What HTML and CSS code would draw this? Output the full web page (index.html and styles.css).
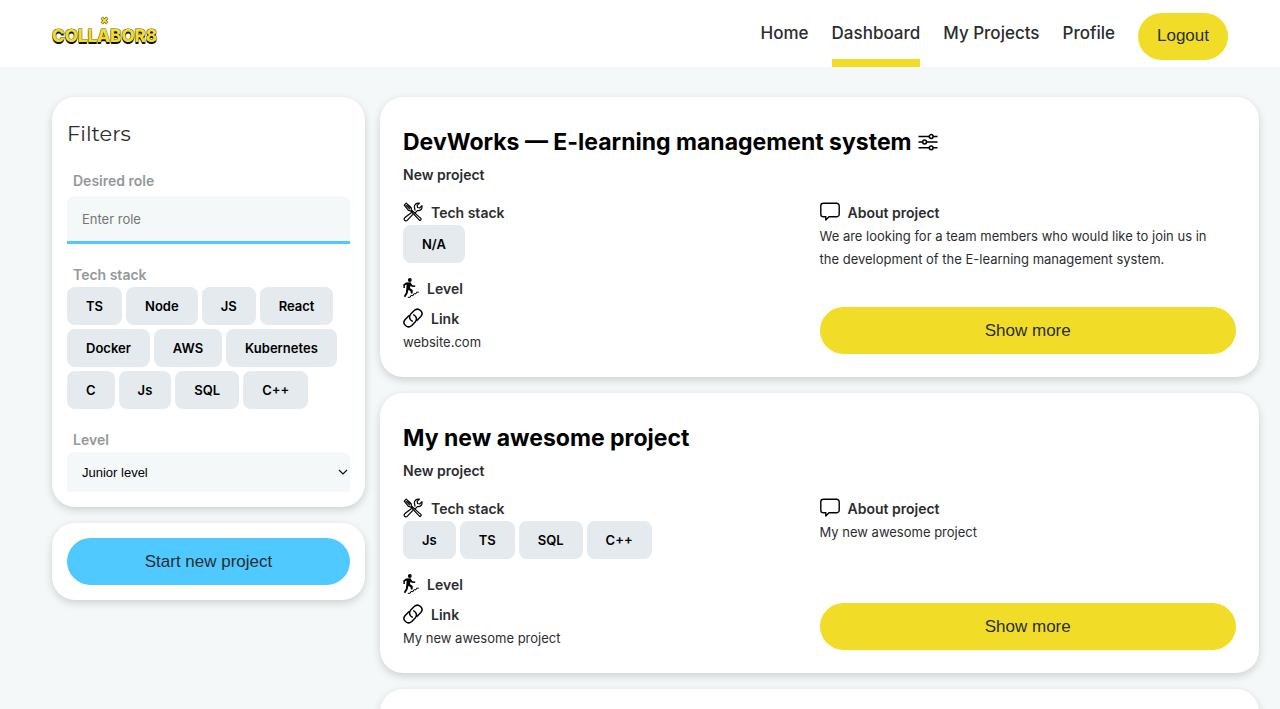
FILE: index.html
```html
<!DOCTYPE html>
<html lang="en">
<head>
    <meta charset="UTF-8">
    <meta name="viewport" content="width=device-width, initial-scale=1.0">
    <title>Collabor8</title>
    <link rel="stylesheet" href="styles.css">
</head>
<body>

    <!-- Shared icons -->
    <svg class="sprite" aria-hidden="true">
        <symbol id="icon-tools" viewBox="0 0 20 20">
            <g fill="none" stroke="currentColor" stroke-width="1.2" stroke-linejoin="round" stroke-linecap="round">
                <path d="M1.2 3.2 3.2 1.1 8.2 5.7 8.4 8 17.8 16.4C18.7 17.3 17.5 19 16.4 18.2L7.7 9 5.5 8.4Z"/>
                <path d="M3.1 3.3 6.6 6.8M4.6 2.8 7.3 5.5"/>
                <path d="M12 8.2 11.4 5.2C11.2 2.5 13.6.6 16.4 1.2L14.1 3.4 14.5 5.5 16.7 5.9 18.9 3.6C19.6 6.7 17.4 9.2 14.4 8.6L12.2 10.8M8.2 10.7 2 15.5C-.2 17.4 2.4 20.3 4.4 18.1L9.6 12.6"/>
            </g>
        </symbol>
        <symbol id="icon-climb" viewBox="0 0 16 20">
            <circle cx="6.8" cy="2" r="1.9" fill="currentColor"/>
            <path fill="currentColor" d="M3 4.4 7.5 4.2 9.4 7.3 12.2 7.6 12.2 9 8.7 8.8 7.6 7.8 6.9 10 9.7 12.1 9.6 15.5 7.8 15.4 7.6 13.2 5.5 11.8 4.5 15.7 2.2 19.2.8 18.3 2.8 14.8 3.4 9.9 3.6 6.4 1.8 7.5 1.9 10 .4 10 .3 6.5Z"/>
            <path fill="none" stroke="currentColor" stroke-width="1" d="M4.8 19.3H7.2L7.8 17.6H10.2L10.8 15.8H13L13.6 14.2H15.8"/>
        </symbol>
        <symbol id="icon-link" viewBox="0 0 20 20">
            <g fill="none" stroke="currentColor" stroke-width="1.5" stroke-linecap="round">
                <path d="M9.2 13.2C6.2 11.6 5.8 8.2 7.8 6L11.2 2.5C15.4-1.2 21.6 4.2 17.8 8.6L14.2 12.2"/>
                <path d="M10.8 6.8C13.8 8.4 14.2 11.8 12.2 14L8.8 17.5C4.6 21.2-1.6 15.8 2.2 11.4L5.8 7.8"/>
            </g>
        </symbol>
        <symbol id="icon-chat" viewBox="0 0 20 20">
            <path fill="none" stroke="currentColor" stroke-width="1.4" stroke-linejoin="round" d="M3.4 1.2H16.6A2.6 2.6 0 0 1 19.2 3.8V12.2A2.6 2.6 0 0 1 16.6 14.8H9L5.8 18V14.8H3.4A2.6 2.6 0 0 1 .8 12.2V3.8A2.6 2.6 0 0 1 3.4 1.2Z"/>
        </symbol>
        <symbol id="icon-sliders" viewBox="0 0 20 20">
            <g fill="none" stroke="currentColor" stroke-width="1.5">
                <path d="M.5 4.5H11.2M15.2 4.5H19.5M.5 10H4.6M8.6 10H19.5M.5 15.8H11.2M15.2 15.8H19.5"/>
                <circle cx="13.2" cy="4.5" r="1.9"/>
                <circle cx="6.6" cy="10" r="1.9"/>
                <circle cx="13.2" cy="15.8" r="1.9"/>
            </g>
        </symbol>
    </svg>

    <header class="header">
        <a class="logo" href="#">
            <svg class="logo-mark" viewBox="0 0 8 8" aria-hidden="true">
                <path d="M1.5 1.5 6.5 6.5M6.5 1.5 1.5 6.5" stroke="#6b6420" stroke-width="2.8"/>
                <path d="M1.7 1.7 6.3 6.3M6.3 1.7 1.7 6.3" stroke="#f1dd28" stroke-width="1.6"/>
            </svg>
            <span class="logo-text">COLLABOR8</span>
        </a>
        <nav class="nav">
            <a href="#">Home</a>
            <a href="#" class="active">Dashboard</a>
            <a href="#">My Projects</a>
            <a href="#">Profile</a>
            <button class="button button-logout">Logout</button>
        </nav>
    </header>

    <main class="main">
        <aside class="sidebar">
            <form class="panel">
                <h2 class="panel-title">Filters</h2>
                <div class="field">
                    <label for="role">Desired role</label>
                    <input type="text" id="role" placeholder="Enter role">
                </div>
                <div class="field">
                    <span class="label">Tech stack</span>
                    <div class="tags">
                        <button type="button" class="tag">TS</button>
                        <button type="button" class="tag">Node</button>
                        <button type="button" class="tag">JS</button>
                        <button type="button" class="tag">React</button>
                        <button type="button" class="tag">Docker</button>
                        <button type="button" class="tag">AWS</button>
                        <button type="button" class="tag">Kubernetes</button>
                        <button type="button" class="tag">C</button>
                        <button type="button" class="tag">Js</button>
                        <button type="button" class="tag">SQL</button>
                        <button type="button" class="tag">C++</button>
                    </div>
                </div>
                <div class="field">
                    <label for="level">Level</label>
                    <div class="select">
                        <select id="level">
                            <option>Junior level</option>
                        </select>
                        <svg class="chevron" viewBox="0 0 10 6" aria-hidden="true"><path d="M1 1 5 5 9 1" fill="none" stroke="#111" stroke-width="1.2"/></svg>
                    </div>
                </div>
            </form>
            <div class="panel">
                <button class="button button-blue">Start new project</button>
            </div>
        </aside>

        <section class="projects">
            <article class="card">
                <h1>DevWorks — E-learning management system <svg class="icon"><use href="#icon-sliders"/></svg></h1>
                <p class="status">New project</p>
                <div class="details">
                    <div>
                        <h3><svg class="icon"><use href="#icon-tools"/></svg>Tech stack</h3>
                        <div class="tags">
                            <span class="tag">N/A</span>
                        </div>
                        <h3 class="level"><svg class="icon icon-narrow"><use href="#icon-climb"/></svg>Level</h3>
                        <h3><svg class="icon"><use href="#icon-link"/></svg>Link</h3>
                        <p>website.com</p>
                    </div>
                    <div class="about">
                        <h3><svg class="icon"><use href="#icon-chat"/></svg>About project</h3>
                        <p>We are looking for a team members who would like to join us in the development of the E-learning management system.</p>
                        <button class="button">Show more</button>
                    </div>
                </div>
            </article>

            <article class="card">
                <h1>My new awesome project</h1>
                <p class="status">New project</p>
                <div class="details">
                    <div>
                        <h3><svg class="icon"><use href="#icon-tools"/></svg>Tech stack</h3>
                        <div class="tags">
                            <span class="tag">Js</span>
                            <span class="tag">TS</span>
                            <span class="tag">SQL</span>
                            <span class="tag">C++</span>
                        </div>
                        <h3 class="level"><svg class="icon icon-narrow"><use href="#icon-climb"/></svg>Level</h3>
                        <h3><svg class="icon"><use href="#icon-link"/></svg>Link</h3>
                        <p>My new awesome project</p>
                    </div>
                    <div class="about">
                        <h3><svg class="icon"><use href="#icon-chat"/></svg>About project</h3>
                        <p>My new awesome project</p>
                        <button class="button">Show more</button>
                    </div>
                </div>
            </article>

            <article class="card"></article>
        </section>
    </main>

</body>
</html>
```
FILE: styles.css
```css
* {
    box-sizing: border-box;
}

body {
    display: flex;
    flex-direction: column;
    margin: 0;
    height: 100vh;
    font-family: Inter, sans-serif;
    font-size: 14px;
    line-height: 23px;
    color: #2b2d2f;
    background-color: #f4f8f9;
}

h1, h2, h3, p {
    margin: 0;
}

.sprite {
    display: none;
}

/* Header */
.header {
    display: flex;
    flex: none;
    justify-content: space-between;
    height: 67px;
    padding: 0 52px;
    background: #fff;
}

.logo {
    display: flex;
    flex-direction: column;
    align-items: center;
    padding-top: 16px;
    text-decoration: none;
}

.logo-mark {
    width: 9px;
    height: 9px;
}

.logo-text {
    font-size: 17px;
    font-weight: 800;
    line-height: 22px;
    color: #f1dd28;
    -webkit-text-stroke: 1px #6b6420;
    paint-order: stroke fill;
    text-shadow: 0 2px 0 #111;
}

.nav {
    display: flex;
    gap: 23px;
}

.nav a {
    padding-top: 7px;
    border-bottom: 8px solid transparent;
    font-size: 17px;
    font-weight: 500;
    line-height: 52px;
    color: #2b2d2f;
    text-decoration: none;
}

.nav a.active {
    border-color: #f1dd28;
}

.button {
    width: 100%;
    height: 47px;
    padding: 0 19px;
    border: none;
    border-radius: 24px;
    font-family: "Liberation Sans", Arial, sans-serif;
    font-size: 17px;
    color: #2b2d2f;
    background: #f1dd28;
    cursor: pointer;
}

.button-logout {
    width: auto;
    align-self: center;
    margin-top: 5px;
}

.button-blue {
    background: #4fc9ff;
}

/* Page layout */
.main {
    display: grid;
    flex: 1;
    grid-template-columns: 313px 1fr;
    gap: 15px;
    align-items: start;
    min-height: 0;
    padding: 30px 21px 0 52px;
    overflow: hidden;
}

.sidebar, .projects {
    display: grid;
    gap: 16px;
}

.panel, .card {
    background: #fff;
    border-radius: 23px;
    box-shadow: 0 3px 8px rgba(0, 0, 0, 0.16);
}

/* Filters */
.panel {
    padding: 15px;
}

.panel-title {
    margin-bottom: 14px;
    font-family: Montserrat, Inter, sans-serif;
    font-size: 21px;
    font-weight: 400;
    line-height: 44px;
}

.field + .field {
    margin-top: 20px;
}

.field label, .field .label {
    display: block;
    margin-bottom: 1px;
    padding-left: 6px;
    font-size: 14px;
    font-weight: 600;
    line-height: 22px;
    color: #94989b;
}

.field input, .field select {
    display: block;
    width: 100%;
    padding: 0 15px;
    border: none;
    border-radius: 8px 8px 0 0;
    outline: none;
    background: #f4f8f9;
}

.field input {
    height: 48px;
    margin-top: 4px;
    border-bottom: 3px solid #4fc9ff;
    font-family: inherit;
    font-size: 13px;
}

.field input::placeholder {
    color: #757575;
}

.field select {
    height: 40px;
    appearance: none;
    font-family: "Liberation Sans", Arial, sans-serif;
    font-size: 13px;
    color: #000;
}

.select {
    position: relative;
}

.chevron {
    position: absolute;
    top: 17px;
    right: 2px;
    width: 10px;
    height: 6px;
    pointer-events: none;
}

.tags {
    display: flex;
    flex-wrap: wrap;
    gap: 4px;
}

.tag {
    height: 38px;
    padding: 0 19px;
    border: none;
    border-radius: 8px;
    font-family: inherit;
    font-size: 13px;
    font-weight: 600;
    line-height: 38px;
    color: #000;
    background: #e4eaed;
}

/* Project cards */
.card {
    min-height: 280px;
    padding: 23px;
}

.card h1 {
    display: flex;
    align-items: center;
    gap: 6px;
    font-size: 23px;
    font-weight: 700;
    line-height: 44px;
    color: #000;
}

.card h3 {
    display: flex;
    align-items: flex-start;
    gap: 8px;
    height: 23px;
    font-size: 14px;
    font-weight: 600;
    line-height: 22px;
}

.card p {
    font-size: 13px;
}

.card .status {
    margin-bottom: 16px;
    font-size: 14px;
    font-weight: 600;
    line-height: 22px;
}

.details {
    display: grid;
    grid-template-columns: 1fr 1fr;
}

.card .level {
    margin: 15px 0 7px;
}

.about {
    display: flex;
    flex-direction: column;
}

.about p {
    padding-right: 16px;
}

.about .button {
    margin-top: auto;
}

.icon {
    flex: none;
    width: 20px;
    height: 20px;
    color: #000;
}

.icon-narrow {
    width: 16px;
}
```
